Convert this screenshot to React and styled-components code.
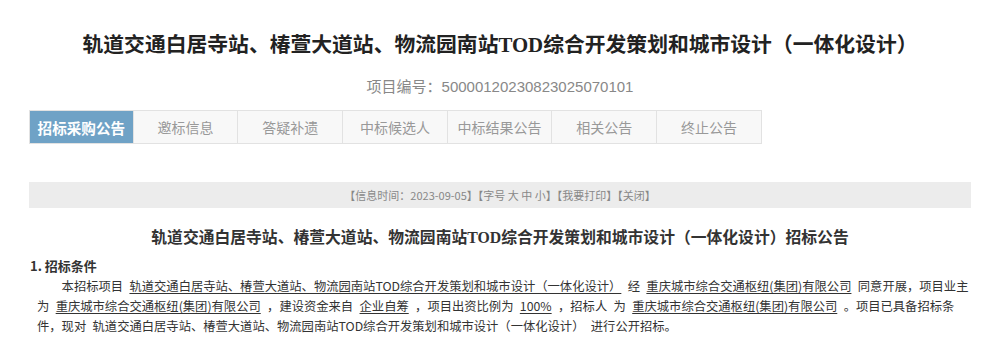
import React from "react";
import styled, { createGlobalStyle } from "styled-components";

const Global = createGlobalStyle`
  html, body { margin: 0; padding: 0; background: #fff; }
  body { font-family: "Liberation Serif", "Noto Sans CJK SC", serif; color: #333; }
`;

const Page = styled.div`
  width: 942px;
  margin: 0 auto;
  display: flex;
  flex-direction: column;
`;

const Title = styled.h1`
  margin: 30px 0 0;
  font-size: 20.8px;
  line-height: 30px;
  font-weight: bold;
  color: #222;
  text-align: center;
  white-space: nowrap;
`;

const Code = styled.div`
  margin-top: 17px;
  font-size: 15px;
  line-height: 20px;
  color: #888;
  text-align: center;
  font-family: "Liberation Serif", "Noto Sans CJK SC", serif;
`;

const Digits = styled.span`
  font-family: "Liberation Sans", sans-serif;
`;

const Tabs = styled.div`
  margin-top: 13px;
  display: flex;
`;

const Tab = styled.div`
  box-sizing: border-box;
  width: 104.7px;
  height: 34px;
  display: flex;
  align-items: center;
  justify-content: center;
  border: 1px solid #e2e2e2;
  border-left: ${(p) => (p.$first ? "1px solid #e2e2e2" : "none")};
  background: ${(p) => (p.$active ? "#6fa2c6" : "#f8f8f8")};
  color: ${(p) => (p.$active ? "#fff" : "#999")};
  font-family: "Noto Sans CJK SC", sans-serif;
  font-size: ${(p) => (p.$active ? "14.6px" : "14px")};
  font-weight: ${(p) => (p.$active ? "bold" : "normal")};
`;

const InfoBar = styled.div`
  margin-top: 38px;
  height: 26px;
  background: #ececec;
  display: flex;
  align-items: center;
  justify-content: center;
  font-family: "Noto Sans CJK SC", sans-serif;
  font-size: 11px;
  color: #888;
  white-space: pre;
`;

const Heading = styled.h2`
  margin: 18px 0 0;
  font-size: 15.8px;
  line-height: 24px;
  font-weight: bold;
  color: #333;
  text-align: center;
  white-space: nowrap;
`;

const Section = styled.div`
  margin-top: 6px;
  padding-left: 1px;
  font-family: "Noto Sans CJK SC", sans-serif;
  font-size: 13px;
  line-height: 20px;
  font-weight: bold;
  color: #333;
`;

const Para = styled.p`
  margin: 0 -4px 0 0;
  padding: 0 0 0 8px;
  font-family: "Noto Sans CJK SC", sans-serif;
  font-size: 12.3px;
  line-height: 20px;
  word-spacing: 3.6px;
  color: #333;
  text-indent: 2em;
`;

const U = styled.span`
  text-decoration: underline;
  text-underline-offset: 2px;
`;

const NAME = "轨道交通白居寺站、椿萱大道站、物流园南站TOD综合开发策划和城市设计（一体化设计）";
const ORG = "重庆城市综合交通枢纽(集团)有限公司";

const tabs = ["招标采购公告", "邀标信息", "答疑补遗", "中标候选人", "中标结果公告", "相关公告", "终止公告"];

export default function App() {
  return (
    <>
      <Global />
      <Page>
        <Title>{NAME}</Title>
        <Code>
          项目编号：<Digits>50000120230823025070101</Digits>
        </Code>
        <Tabs>
          {tabs.map((t, i) => (
            <Tab key={t} $active={i === 0} $first={i === 0}>
              {t}
            </Tab>
          ))}
        </Tabs>
        <InfoBar>{"【信息时间：2023-09-05】【字号 大 中 小】【我要打印】【关闭】"}</InfoBar>
        <Heading>{NAME}招标公告</Heading>
        <Section>1. 招标条件</Section>
        <Para>
          本招标项目 <U>{NAME}</U> 经 <U>{ORG}</U> 同意开展，项目业主为 <U>{ORG}</U> ，建设资金来自 <U>企业自筹</U> ，项目出资比例为 <U>100%</U> ，招标人 为 <U>{ORG}</U> 。项目已具备招标条件，现对 {NAME} 进行公开招标。
        </Para>
      </Page>
    </>
  );
}
